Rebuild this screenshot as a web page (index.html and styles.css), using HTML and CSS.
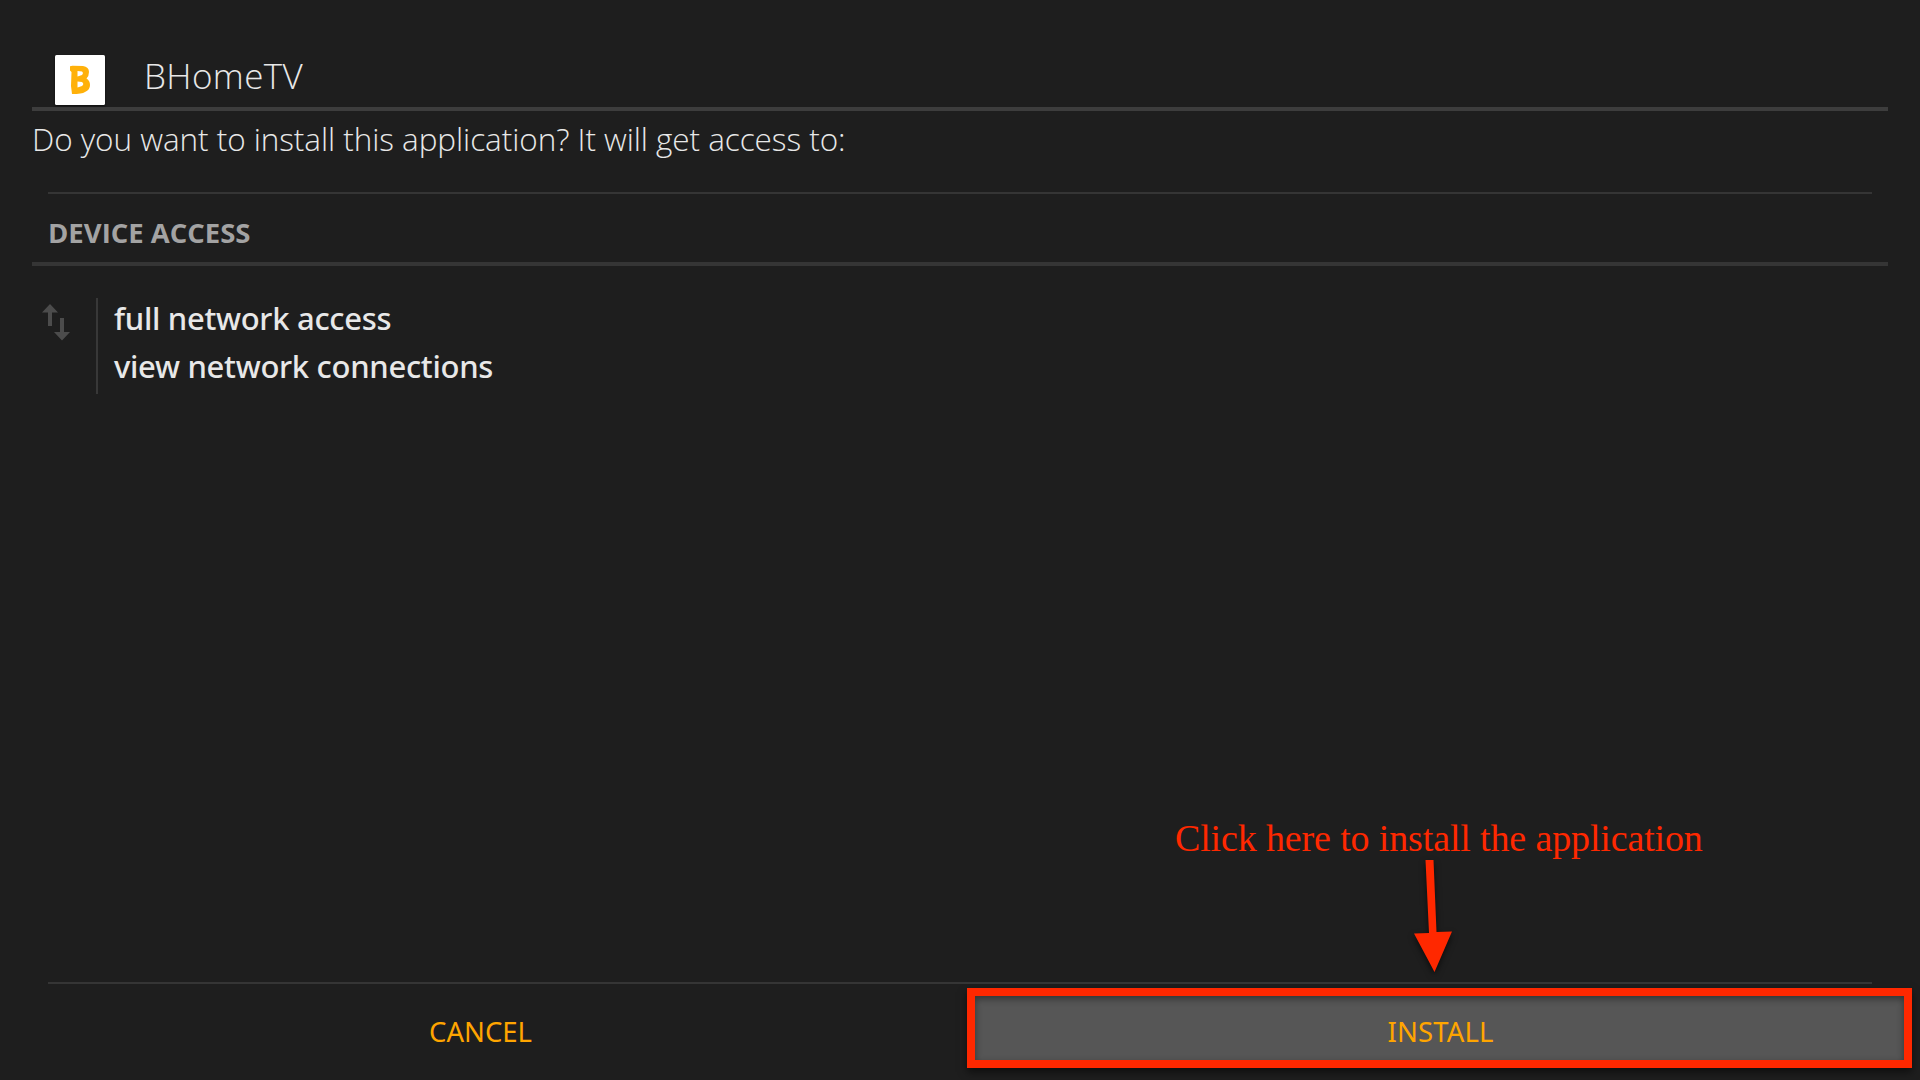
FILE: index.html
```html
<!DOCTYPE html>
<html lang="en">
<head>
<meta charset="utf-8">
<title>BHomeTV</title>
<link rel="stylesheet" href="styles.css">
</head>
<body>
<main class="installer">
  <header class="app-header">
    <svg class="app-icon" viewBox="0 0 50 50" aria-hidden="true">
      <rect width="50" height="50" rx="1.5" fill="#fff"/>
      <path fill="#ffb10a" fill-rule="evenodd" d="M15 11.300 L17.500 10.800 L28 11 Q34 12 34 17 Q34 21 31.500 23.500 Q35 25.500 35 30 Q35 35 30 37 Q27 39 17 39 L16 31 L16.500 17 L15 15.500 Z M22.500 16 V21.500 L27 20 Q28.800 18 27 16.500 Z M22.500 26.500 V32.500 L27 31 Q29.500 29 27 27 Z"/>
    </svg>
    <h1 class="app-name">BHomeTV</h1>
  </header>
  <p class="question">Do you want to install this application? It will get access to:</p>
  <h2 class="section-title">DEVICE ACCESS</h2>
  <section class="permissions">
    <svg class="network-icon" viewBox="0 0 32 40" aria-hidden="true">
      <path fill="#4c4c4c" d="M10 2 L18 10.500 H12 V24 H8 V10.500 H2 Z M20 16 H24 V30 H30 L22 38.500 L14 30 H20 Z"/>
    </svg>
    <ul class="permission-list">
      <li>full network access</li>
      <li>view network connections</li>
    </ul>
  </section>
  <footer class="actions">
    <button class="action">CANCEL</button>
    <button class="action action-selected">INSTALL</button>
  </footer>
</main>
<div class="callout">
  <span class="callout-text">Click here to install the application</span>
  <svg class="callout-arrow" viewBox="0 0 48 122" aria-hidden="true">
    <path fill="#ff2800" d="M17.500 6 H25.500 L28.500 78 L44 77.500 L26.500 118 L6 79.500 L21 79 Z"/>
  </svg>
</div>
</body>
</html>
```
FILE: styles.css
```css
* { box-sizing: border-box; margin: 0; padding: 0; }

body {
  width: 1920px;
  height: 1080px;
  overflow: hidden;
  background: #1e1e1e;
  color: #e8e8e8;
  font-family: "Open Sans", "Noto Sans", sans-serif;
}

.installer {
  display: flex;
  flex-direction: column;
  height: 1080px;
}

.app-header {
  display: flex;
  align-items: flex-start;
  gap: 39px;
  height: 111px;
  margin: 0 32px;
  padding-left: 23px;
  border-bottom: 4px solid #3d3d3d;
}

.app-icon {
  width: 50px;
  height: 50px;
  margin-top: 55px;
  filter: drop-shadow(0 1px 1px #0008);
}

.app-name {
  margin-top: 52px;
  font-size: 35px;
  line-height: 48px;
  font-weight: 300;
  letter-spacing: 0.4px;
}

.question {
  height: 81px;
  padding-left: 32px;
  font-size: 31.5px;
  line-height: 56px;
  font-weight: 300;
  letter-spacing: -0.06px;
}

.section-title {
  position: relative;
  height: 74px;
  margin: 0 48px;
  padding-top: 9px;
  border-top: 2px solid #353535;
  color: #a3a3a3;
  font-size: 27.5px;
  line-height: 60px;
  font-weight: 700;
}

.section-title::after {
  content: "";
  position: absolute;
  left: -16px;
  right: -16px;
  bottom: 0;
  height: 4px;
  background: #353535;
}

.permissions {
  display: flex;
  align-items: flex-start;
  flex: 1;
  padding: 32px 0 0 40px;
}

.network-icon {
  width: 32px;
  height: 40px;
  margin: 4px 24px 0 0;
}

.permission-list {
  height: 96px;
  padding-left: 16px;
  border-left: 2px solid #383838;
  list-style: none;
  font-family: "Noto Sans", sans-serif;
  font-size: 31px;
  line-height: 48px;
  font-weight: 500;
  letter-spacing: -0.3px;
}

.permission-list li:first-child { margin-top: -4px; }

.actions {
  position: relative;
  display: flex;
  height: 98px;
  margin: 0 8px 0 0;
}

.actions::before {
  content: "";
  position: absolute;
  top: 0;
  left: 48px;
  right: 40px;
  height: 2px;
  background: #353535;
}

.action {
  width: 961px;
  height: 80px;
  margin-top: 6px;
  padding-top: 7px;
  border: 0;
  background: none;
  color: #ffa500;
  font-family: "Noto Sans", sans-serif;
  font-size: 27.5px;
}

.action-selected {
  width: 945px;
  margin-left: 6px;
  padding-left: 2px;
  border: 8px solid #ff2800;
  background: #565656;
  letter-spacing: 0.15px;
  box-shadow: 0 4px 8px #0008, inset 0 3px 7px #0006;
}

.callout {
  position: absolute;
  left: 1175px;
  top: 815px;
  width: 500px;
  color: #ff2800;
}

.callout-text {
  display: block;
  font-family: "Liberation Serif", serif;
  font-size: 38px;
  line-height: 46px;
  letter-spacing: -0.14px;
  white-space: nowrap;
}

.callout-arrow {
  display: block;
  width: 48px;
  height: 122px;
  margin: -7px 0 0 233px;
  filter: drop-shadow(0 3px 3px #0009);
}
```
